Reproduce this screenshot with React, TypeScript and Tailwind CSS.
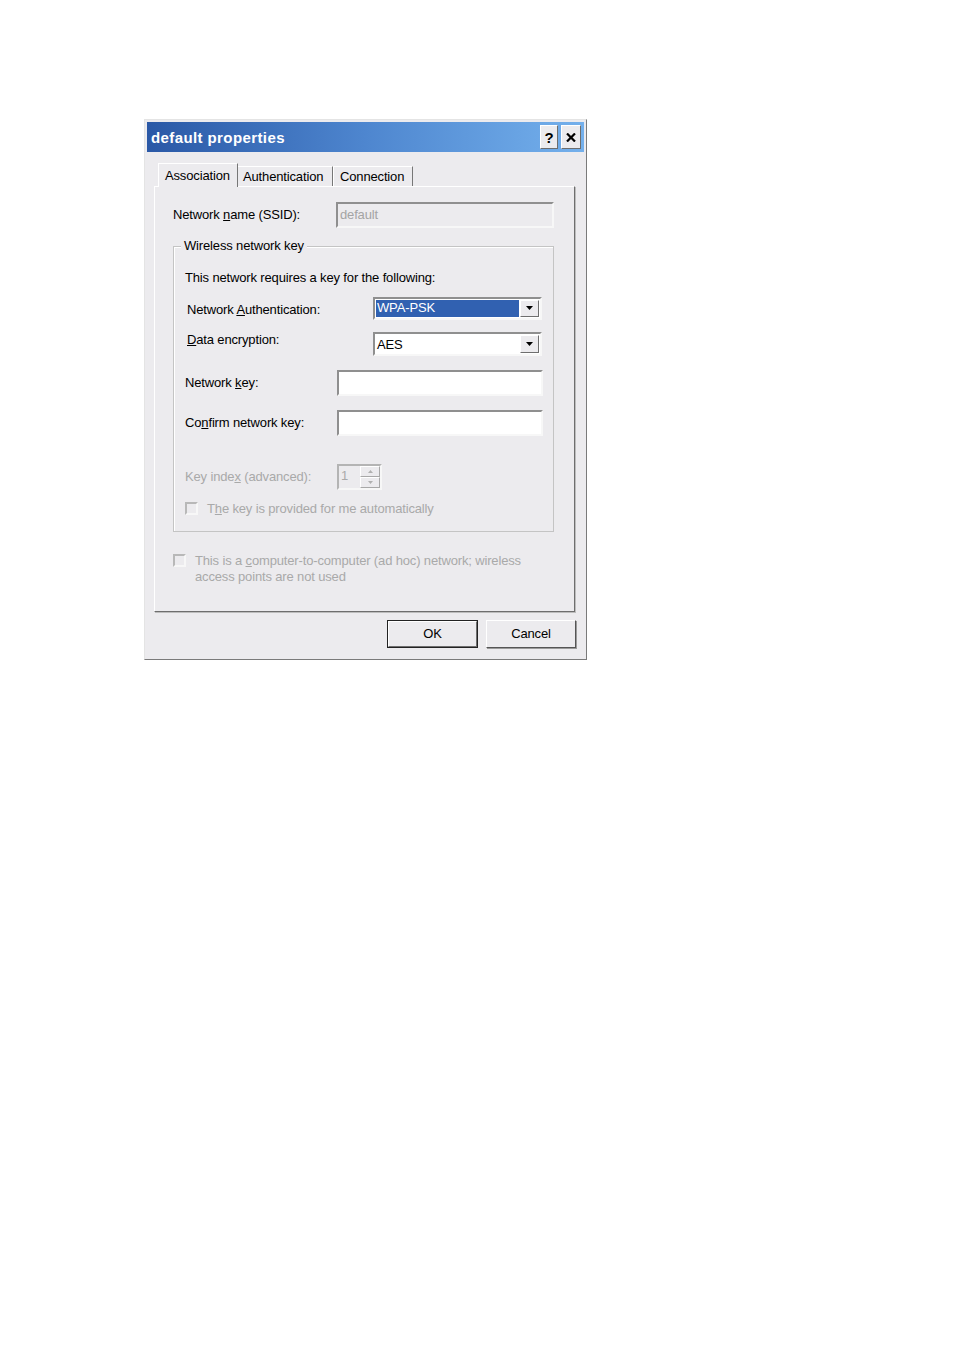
import React from "react";

const sunken =
  "border-2 border-t-[#8f8f8f] border-l-[#8f8f8f] border-b-[#f7f7f7] border-r-[#f7f7f7]";
const raised =
  "border border-t-white border-l-white border-b-[#6e6e6e] border-r-[#6e6e6e]";

function Arrow() {
  return (
    <div className={`w-[19px] h-full bg-[#ecebee] ${raised} flex items-center justify-center`}>
      <svg width="7" height="4" viewBox="0 0 7 4">
        <path d="M0 0h7L3.5 4z" fill="#000" />
      </svg>
    </div>
  );
}

function Check({ className = "" }: { className?: string }) {
  return <div className={`w-[13px] h-[13px] shrink-0 ${sunken} border-t-[#b8b8b8] border-l-[#b8b8b8] bg-[#ecebee] ${className}`} />;
}

export default function App() {
  return (
    <div
      className="min-h-[1350px] bg-white pt-[119px] pl-[144px] text-[13px] tracking-[-0.15px] text-black"
      style={{ fontFamily: '"Liberation Sans", Arial, sans-serif' }}
    >
      <div className="w-[443px] h-[541px] bg-[#ecebee] border border-t-[#e4e4e4] border-l-[#e4e4e4] border-b-[#7a7a7a] border-r-[#7a7a7a] p-[2px] flex flex-col">
        {/* Title bar */}
        <div className="h-[30px] bg-gradient-to-r from-[#2a58a6] via-[#4e86cf] to-[#74b0ec] flex items-center pl-[4px] pr-[3px]">
          <div className="text-white font-bold text-[15px] tracking-[0.4px] flex-1 leading-none">default properties</div>
          <div className="flex gap-[3px]">
            <div className={`w-[18px] h-[24px] bg-[#ecebee] ${raised} flex items-center justify-center font-bold text-[15px] leading-none`}>?</div>
            <div className={`w-[20px] h-[24px] bg-[#ecebee] ${raised} flex items-center justify-center`}>
              <svg width="10" height="9" viewBox="0 0 10 9">
                <path d="M1 0.5L9 8.5M9 0.5L1 8.5" stroke="#000" strokeWidth="2.2" />
              </svg>
            </div>
          </div>
        </div>

        {/* Tabs */}
        <div className="pl-[11px] mt-[10px] flex items-end h-[24px] relative z-10">
          <div className="h-[24px] px-[6px] pt-[2px] border border-b-0 border-t-white border-l-white border-r-[#777] bg-[#ecebee] -mb-px flex items-start w-[80px]">
            Association
          </div>
          <div className="h-[20px] w-[95px] px-[5px] border border-b-0 border-t-white border-l-0 border-r-[#777] flex items-center">
            Authentication
          </div>
          <div className="h-[20px] w-[80px] px-[6px] border border-b-0 border-t-white border-l-[#fff] border-r-[#777] flex items-center">
            Connection
          </div>
        </div>

        {/* Tab panel */}
        <div className="ml-[7px] w-[421px] h-[426px] border border-t-white border-l-white border-b-[#6e6e6e] border-r-[#6e6e6e] shadow-[1px_1px_0_#bdbdbd] flex flex-col pl-[18px]">
          <div className="mt-[15px] h-[26px] flex items-center">
            <div className="w-[163px]">
              Network <u>n</u>ame (SSID):
            </div>
            <div className={`w-[218px] h-[26px] ${sunken} bg-[#ecebee] text-[#a4a4a4] flex items-center pl-[2px]`}>default</div>
          </div>

          {/* Group box */}
          <div className="mt-[18px] w-[381px] h-[286px] border border-[#c4c4c4] shadow-[inset_1px_1px_0_#fff] relative pl-[11px] flex flex-col">
            <div className="absolute -top-[9px] left-[7px] px-[3px] bg-[#ecebee] leading-[16px]">Wireless network key</div>
            <div className="mt-[23px] leading-[16px]">This network requires a key for the following:</div>
            <div className="mt-[11px] h-[22px] flex items-center">
              <div className="w-[188px] pl-[2px] pt-[4px]">
                Network <u>A</u>uthentication:
              </div>
              <div className={`w-[169px] h-[23px] ${sunken} bg-white flex items-stretch p-[1px]`}>
                <div className="flex-1 bg-[#3161b1] text-white flex items-center pl-[1px] mr-[1px]">WPA-PSK</div>
                <Arrow />
              </div>
            </div>
            <div className="mt-[13px] h-[23px] flex items-center">
              <div className="w-[188px] pl-[2px] -mt-[7px]">
                <u>D</u>ata encryption:
              </div>
              <div className={`w-[169px] h-[24px] ${sunken} bg-white flex items-stretch p-[1px]`}>
                <div className="flex-1 flex items-center pl-[1px] pt-[2px] mr-[1px]">AES</div>
                <Arrow />
              </div>
            </div>
            <div className="mt-[15px] h-[26px] flex items-center">
              <div className="w-[152px]">
                Network <u>k</u>ey:
              </div>
              <div className={`w-[206px] h-[26px] ${sunken} bg-white`} />
            </div>
            <div className="mt-[14px] h-[26px] flex items-center">
              <div className="w-[152px]">
                Co<u>n</u>firm network key:
              </div>
              <div className={`w-[206px] h-[26px] ${sunken} bg-white`} />
            </div>
            <div className="mt-[28px] h-[26px] flex items-center text-[#a9a9a9]">
              <div className="w-[152px]">
                Key inde<u>x</u> (advanced):
              </div>
              <div className={`w-[45px] h-[26px] ${sunken} border-t-[#b4b4b4] border-l-[#b4b4b4] bg-[#ecebee] flex`}>
                <div className="flex-1 pl-[2px] leading-[20px]">1</div>
                <div className="w-[20px] flex flex-col">
                  <div className="flex-1 border border-t-white border-l-white border-b-[#a8a8a8] border-r-[#a8a8a8] flex items-center justify-center">
                    <svg width="5" height="3" viewBox="0 0 5 3"><path d="M2.5 0L5 3H0z" fill="#b0b0b0" /></svg>
                  </div>
                  <div className="flex-1 border border-t-white border-l-white border-b-[#a8a8a8] border-r-[#a8a8a8] flex items-center justify-center">
                    <svg width="5" height="3" viewBox="0 0 5 3"><path d="M0 0h5L2.5 3z" fill="#b0b0b0" /></svg>
                  </div>
                </div>
              </div>
            </div>
            <div className="mt-[9px] flex items-center text-[#a9a9a9]">
              <Check />
              <div className="ml-[9px]">
                T<u>h</u>e key is provided for me automatically
              </div>
            </div>
          </div>

          <div className="mt-[21px] flex items-start text-[#a9a9a9] leading-[16px]">
            <Check className="mt-[1px]" />
            <div className="ml-[9px] w-[340px]">
              This is a <u>c</u>omputer-to-computer (ad hoc) network; wireless access points are not used
            </div>
          </div>
        </div>

        {/* Buttons */}
        <div className="mt-[8px] flex justify-end gap-[8px] pr-[8px]">
          <div className="w-[91px] h-[28px] border border-[#222] p-0">
            <div className={`w-full h-full ${raised} flex items-center justify-center`}>OK</div>
          </div>
          <div className={`w-[90px] h-[28px] ${raised} border-b-[#555] border-r-[#555] shadow-[1px_1px_0_#9a9a9a] flex items-center justify-center`}>Cancel</div>
        </div>
      </div>
    </div>
  );
}
